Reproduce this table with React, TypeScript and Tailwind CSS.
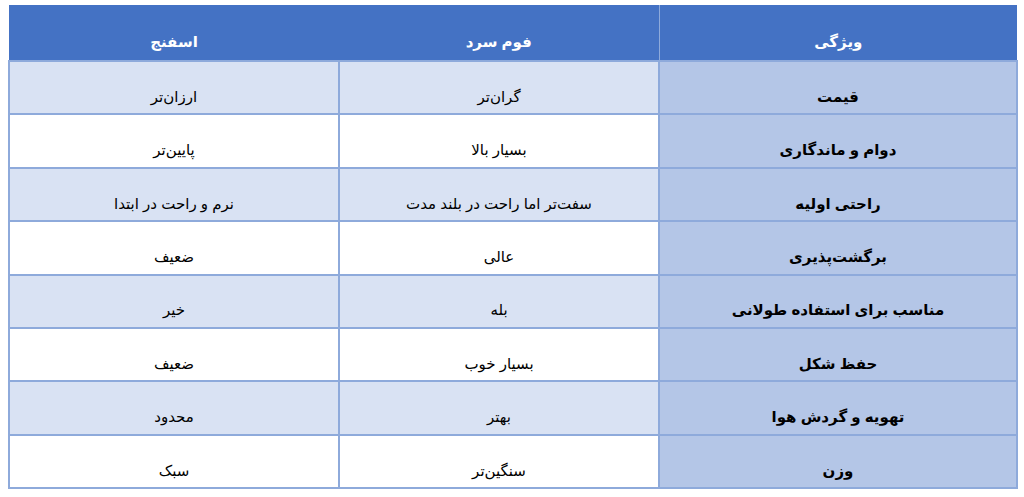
const rows: [string, string, string][] = [
  ["قیمت", "گران‌تر", "ارزان‌تر"],
  ["دوام و ماندگاری", "بسیار بالا", "پایین‌تر"],
  ["راحتی اولیه", "سفت‌تر اما راحت در بلند مدت", "نرم و راحت در ابتدا"],
  ["برگشت‌پذیری", "عالی", "ضعیف"],
  ["مناسب برای استفاده طولانی", "بله", "خیر"],
  ["حفظ شکل", "بسیار خوب", "ضعیف"],
  ["تهویه و گردش هوا", "بهتر", "محدود"],
  ["وزن", "سنگین‌تر", "سبک"],
];

export default function App() {
  return (
    <div className="h-[497px] w-[1024px] bg-white pl-[8px] pr-[6px] pt-[5px] font-['Liberation_Sans','DejaVu_Sans',sans-serif]">
      <table dir="rtl" className="w-full border-collapse text-[15px] text-black">
        <thead>
          <tr className="h-[56px] bg-[#4472C4] text-white">
            <th className="w-[358px] border-l border-[#8EAADB] px-2 pb-[7px] align-bottom font-bold">ویژگی</th>
            <th className="w-[320px] px-2 pb-[7px] align-bottom font-bold">فوم سرد</th>
            <th className="px-2 pb-[7px] align-bottom font-bold">اسفنج</th>
          </tr>
        </thead>
        <tbody>
          {rows.map(([feature, cold, sponge], i) => {
            const shade = i % 2 === 0 ? "bg-[#D9E2F3]" : "bg-white";
            return (
              <tr key={i} className="h-[53.4px]">
                <td className="border-2 border-[#8EAADB] bg-[#B4C6E7] px-2 pb-[5px] text-center align-bottom font-bold">
                  {feature}
                </td>
                <td className={`border-2 border-[#8EAADB] ${shade} px-2 pb-[5px] text-center align-bottom`}>{cold}</td>
                <td className={`border-2 border-[#8EAADB] ${shade} px-2 pb-[5px] text-center align-bottom`}>{sponge}</td>
              </tr>
            );
          })}
        </tbody>
      </table>
    </div>
  );
}
